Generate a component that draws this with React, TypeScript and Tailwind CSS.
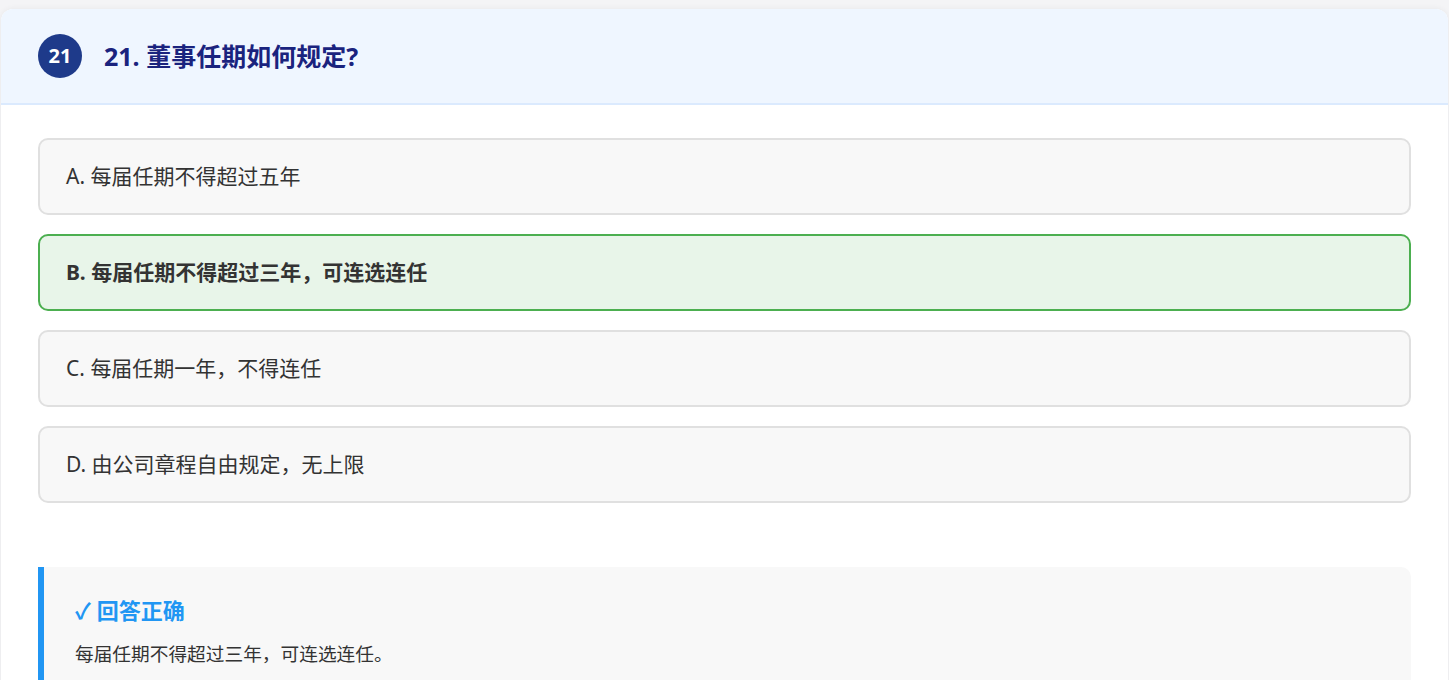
import React from "react";

const font = { fontFamily: '"Noto Sans", "Noto Sans CJK SC", sans-serif' };

const options = [
  { key: "A", text: "每届任期不得超过五年", correct: false },
  { key: "B", text: "每届任期不得超过三年，可连选连任", correct: true },
  { key: "C", text: "每届任期一年，不得连任", correct: false },
  { key: "D", text: "由公司章程自由规定，无上限", correct: false },
];

export default function App() {
  return (
    <div className="min-h-[680px] bg-[#f4f4f6] pt-[9px]" style={font}>
      <div className="mx-[1px] overflow-hidden rounded-t-[12px] bg-white shadow-[0_0_6px_rgba(0,0,0,0.06)]">
        <div className="flex h-[96px] items-center gap-[22px] border-b-2 border-[#dbeafe] bg-[#eff6ff] px-[37px]">
          <div className="flex h-[44px] w-[44px] items-center justify-center rounded-full bg-[#1e3a8a] text-[20px] font-bold text-white">
            21
          </div>
          <h1 className="text-[25px] font-bold leading-none text-[#1a237e]">21. 董事任期如何规定?</h1>
        </div>
        <div className="px-[37px] pt-[33px]">
          <div className="flex flex-col gap-[19px]">
            {options.map((o) => (
              <div
                key={o.key}
                className={
                  o.correct
                    ? "flex h-[77px] items-center rounded-[10px] border-2 border-[#4caf50] bg-[#e8f5e9] px-[26px] text-[21px] font-bold text-[#333333]"
                    : "flex h-[77px] items-center rounded-[10px] border-2 border-[#e0e0e0] bg-[#f8f8f8] px-[26px] text-[21px] text-[#333333]"
                }
              >
                {o.key}. {o.text}
              </div>
            ))}
          </div>
          <div className="mt-[64px] rounded-r-[10px] border-l-[6px] border-[#2196f3] bg-[#f8f8f8] px-[31px] pb-[30px] pt-[28px]">
            <div className="text-[22px] font-bold leading-[30px] text-[#2196f3]">✓ 回答正确</div>
            <div className="mt-[14px] text-[18.7px] leading-[30px] text-[#333333]">每届任期不得超过三年，可连选连任。</div>
          </div>
        </div>
      </div>
    </div>
  );
}
